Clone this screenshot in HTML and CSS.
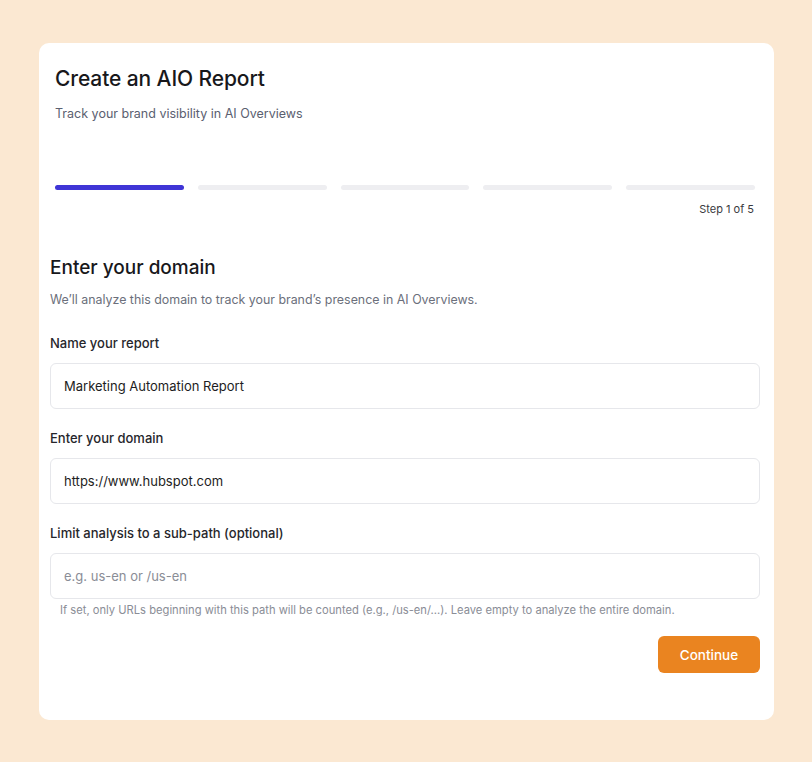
FILE: index.html
```html
<!DOCTYPE html>
<html>
<head>
<meta charset="utf-8">
<link rel="stylesheet" href="styles.css">
</head>
<body>
<div class="card">
  <div class="header">
    <h1 class="title">Create an AIO Report</h1>
    <p class="subtitle">Track your brand visibility in AI Overviews</p>
    <div class="progress">
      <div class="bar active"></div>
      <div class="bar"></div>
      <div class="bar"></div>
      <div class="bar"></div>
      <div class="bar"></div>
    </div>
    <div class="step">Step 1 of 5</div>
  </div>
  <div class="form">
    <h2 class="section-title">Enter your domain</h2>
    <p class="section-desc">We’ll analyze this domain to track your brand’s presence in AI Overviews.</p>
    <div class="field">
      <label class="label">Name your report</label>
      <div class="input">Marketing Automation Report</div>
    </div>
    <div class="field">
      <label class="label">Enter your domain</label>
      <div class="input">https://www.hubspot.com</div>
    </div>
    <div class="field">
      <label class="label">Limit analysis to a sub-path (optional)</label>
      <div class="input placeholder">e.g. us-en or /us-en</div>
      <div class="help">If set, only URLs beginning with this path will be counted (e.g., /us-en/...). Leave empty to analyze the entire domain.</div>
    </div>
    <div class="actions">
      <button class="btn">Continue</button>
    </div>
  </div>
</div>
</body>
</html>
```
FILE: styles.css
```css
* { box-sizing: border-box; }
html, body { margin: 0; padding: 0; }
body {
  background: #fbe8d2;
  font-family: Inter, "Noto Sans", sans-serif;
  color: #1a1a1f;
  width: 812px;
  height: 762px;
  padding: 43px 38px 0 39px;
}
.card {
  background: #ffffff;
  border-radius: 10px;
  height: 677px;
  padding-top: 22px;
}
.header { padding: 0 19px 0 16px; }
.title {
  margin: 0;
  font-size: 21px;
  font-weight: 500;
  line-height: 28px;
  color: #18181b;
  letter-spacing: -0.1px;
}
.subtitle {
  margin: 12px 0 0;
  font-size: 12.5px;
  line-height: 18px;
  color: #5b6070;
}
.progress {
  display: flex;
  gap: 14px;
  margin-top: 62px;
}
.bar {
  flex: 1;
  height: 5px;
  border-radius: 3px;
  background: #eeeef1;
}
.bar.active { background: #3f35d6; }
.step {
  text-align: right;
  font-size: 11px;
  line-height: 16px;
  margin-top: 11px;
  color: #3a3a40;
  padding-right: 1px;
}
.form { padding: 38px 14px 0 11px; }
.section-title {
  margin: 0;
  font-size: 19px;
  font-weight: 500;
  line-height: 26px;
  color: #18181b;
}
.section-desc {
  margin: 10px 0 0;
  font-size: 12.4px;
  line-height: 18px;
  color: #6b6f7b;
}
.field { margin-top: 25px; }
.field + .field { margin-top: 20px; }
.label {
  display: block;
  font-size: 13px;
  font-weight: 500;
  line-height: 18px;
  color: #26262b;
}
.input {
  margin-top: 11px;
  height: 46px;
  border: 1px solid #e6e7eb;
  border-radius: 6px;
  padding: 0 13px;
  display: flex;
  align-items: center;
  font-size: 13px;
  color: #1d1d22;
}
.input.placeholder { color: #8a8d96; }
.help {
  margin-top: 3px;
  padding-left: 10px;
  font-size: 11.2px;
  line-height: 16px;
  color: #8a8d96;
}
.actions {
  display: flex;
  justify-content: flex-end;
  margin-top: 18px;
}
.btn {
  width: 102px;
  height: 37px;
  border: none;
  border-radius: 6px;
  background: #ea8420;
  color: #ffffff;
  font-family: inherit;
  font-size: 13.5px;
  font-weight: 500;
}
```
